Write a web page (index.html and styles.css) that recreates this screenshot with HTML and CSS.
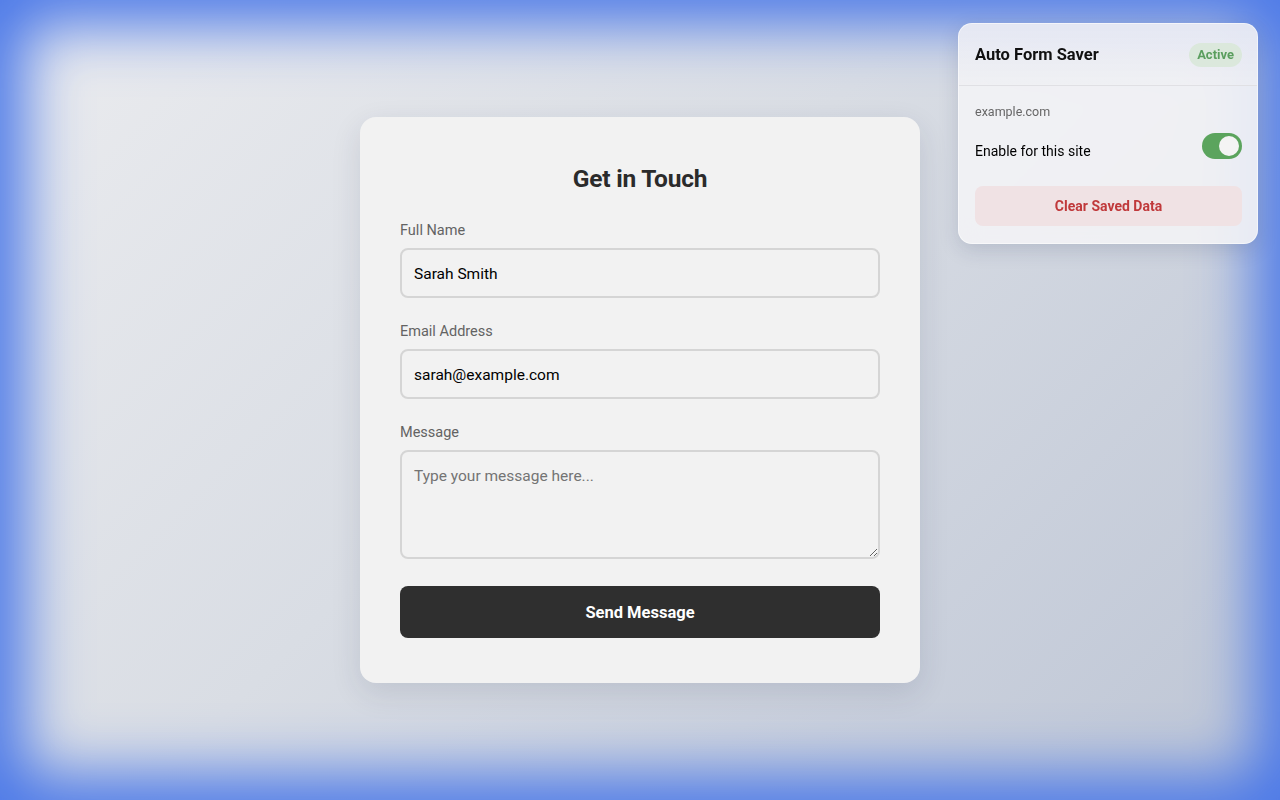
FILE: index.html
```html
<!DOCTYPE html>
<html lang="en">
<head>
<meta charset="utf-8">
<title>Get in Touch</title>
<link rel="stylesheet" href="styles.css">
</head>
<body>
<div class="backdrop">
  <main class="card">
    <h1 class="title">Get in Touch</h1>
    <form class="form">
      <div class="group">
        <label class="label" for="name">Full Name</label>
        <input class="field" id="name" type="text" value="Sarah Smith">
      </div>
      <div class="group">
        <label class="label" for="email">Email Address</label>
        <input class="field" id="email" type="email" value="sarah@example.com">
      </div>
      <div class="group">
        <label class="label" for="msg">Message</label>
        <textarea class="field area" id="msg" placeholder="Type your message here..."></textarea>
      </div>
      <button class="send" type="button">Send Message</button>
    </form>
  </main>

  <aside class="popup">
    <div class="popup-head">
      <span class="popup-title">Auto Form Saver</span>
      <span class="badge">Active</span>
    </div>
    <div class="popup-body">
      <div class="site">example.com</div>
      <div class="row">
        <span class="row-label">Enable for this site</span>
        <span class="toggle"><span class="knob"></span></span>
      </div>
      <button class="clear" type="button">Clear Saved Data</button>
    </div>
  </aside>
</div>
</body>
</html>
```
FILE: styles.css
```css
* { box-sizing: border-box; }
html, body { margin: 0; padding: 0; }
body {
  font-family: Roboto, "Liberation Sans", Arial, sans-serif;
  background: #4c79e8;
  color: #222;
}
.backdrop {
  position: relative;
  width: 1280px;
  height: 800px;
  background: linear-gradient(135deg, #ebecef 0%, #d9dde4 45%, #bdc5d5 100%);
  box-shadow: inset 0 0 60px 25px #4c79e8;
  display: flex;
  align-items: center;
  justify-content: center;
}
.card {
  width: 560px;
  background: #f2f2f2;
  border-radius: 16px;
  padding: 40px 40px 45px;
  box-shadow: 0 10px 30px rgba(30, 40, 70, 0.12);
}
.title {
  margin: 0 0 20px;
  padding-top: 1px;
  font-size: 24.5px;
  line-height: 42px;
  font-weight: 700;
  text-align: center;
  color: #2b2b2b;
  letter-spacing: -0.2px;
}
.form { display: flex; flex-direction: column; }
.group { display: flex; flex-direction: column; margin-bottom: 23px; }
.group:nth-child(3) { margin-bottom: 27px; }
.label {
  padding-top: 1px;
  font-size: 14.5px;
  line-height: 20px;
  color: #636363;
  margin-bottom: 7px;
}
.field {
  height: 50px;
  border: 2px solid #d5d5d5;
  border-radius: 8px;
  background: #f2f2f2;
  padding: 2px 12px 0;
  font-family: Roboto, "Liberation Sans", Arial, sans-serif;
  font-size: 15.5px;
  color: #000;
  outline: none;
}
.area {
  height: 109px;
  padding: 15px 12px;
  resize: vertical;
}
.area::placeholder { color: #747474; }
.send {
  height: 52px;
  border: none;
  border-radius: 8px;
  background: #2f2f2f;
  color: #fff;
  font-family: Roboto, "Liberation Sans", Arial, sans-serif;
  font-size: 16.5px;
  font-weight: 700;
}
.popup {
  position: absolute;
  top: 23px;
  left: 958px;
  width: 300px;
  border-radius: 14px;
  background: rgba(244, 244, 246, 0.88);
  backdrop-filter: blur(12px);
  box-shadow: 0 6px 20px rgba(30, 40, 80, 0.15);
  border: 1px solid rgba(255, 255, 255, 0.5);
  overflow: hidden;
}
.popup-head {
  height: 62px;
  display: flex;
  align-items: center;
  justify-content: space-between;
  padding: 0 15px 0 16px;
  border-bottom: 1px solid #e0e0e4;
  background: linear-gradient(180deg, rgba(226, 229, 242, 0.6), rgba(240, 240, 243, 0.3));
}
.popup-title {
  font-size: 16.5px;
  font-weight: 700;
  color: #111;
}
.badge {
  height: 24px;
  padding: 0 8px;
  border-radius: 12px;
  background: #dbe8dc;
  color: #5a9e5e;
  font-size: 13px;
  font-weight: 700;
  line-height: 24px;
}
.popup-body { padding: 17px 15px 17px 16px; }
.site { font-size: 12.5px; line-height: 18px; color: #666; }
.row {
  margin-top: 12px;
  display: flex;
  justify-content: space-between;
  align-items: flex-start;
}
.row-label {
  margin-top: 9px;
  font-size: 14px;
  line-height: 18px;
  color: #000;
}
.toggle {
  width: 40px;
  height: 26px;
  border-radius: 13px;
  background: #5ba45d;
  display: flex;
  align-items: center;
  justify-content: flex-end;
  padding: 0 3px;
}
.knob {
  width: 20px;
  height: 20px;
  border-radius: 50%;
  background: #f4f4f4;
}
.clear {
  display: block;
  width: 100%;
  margin-top: 26px;
  height: 40px;
  border: none;
  border-radius: 8px;
  background: #f0e2e4;
  color: #c0393b;
  font-family: Roboto, "Liberation Sans", Arial, sans-serif;
  font-size: 14px;
  font-weight: 700;
}
```
